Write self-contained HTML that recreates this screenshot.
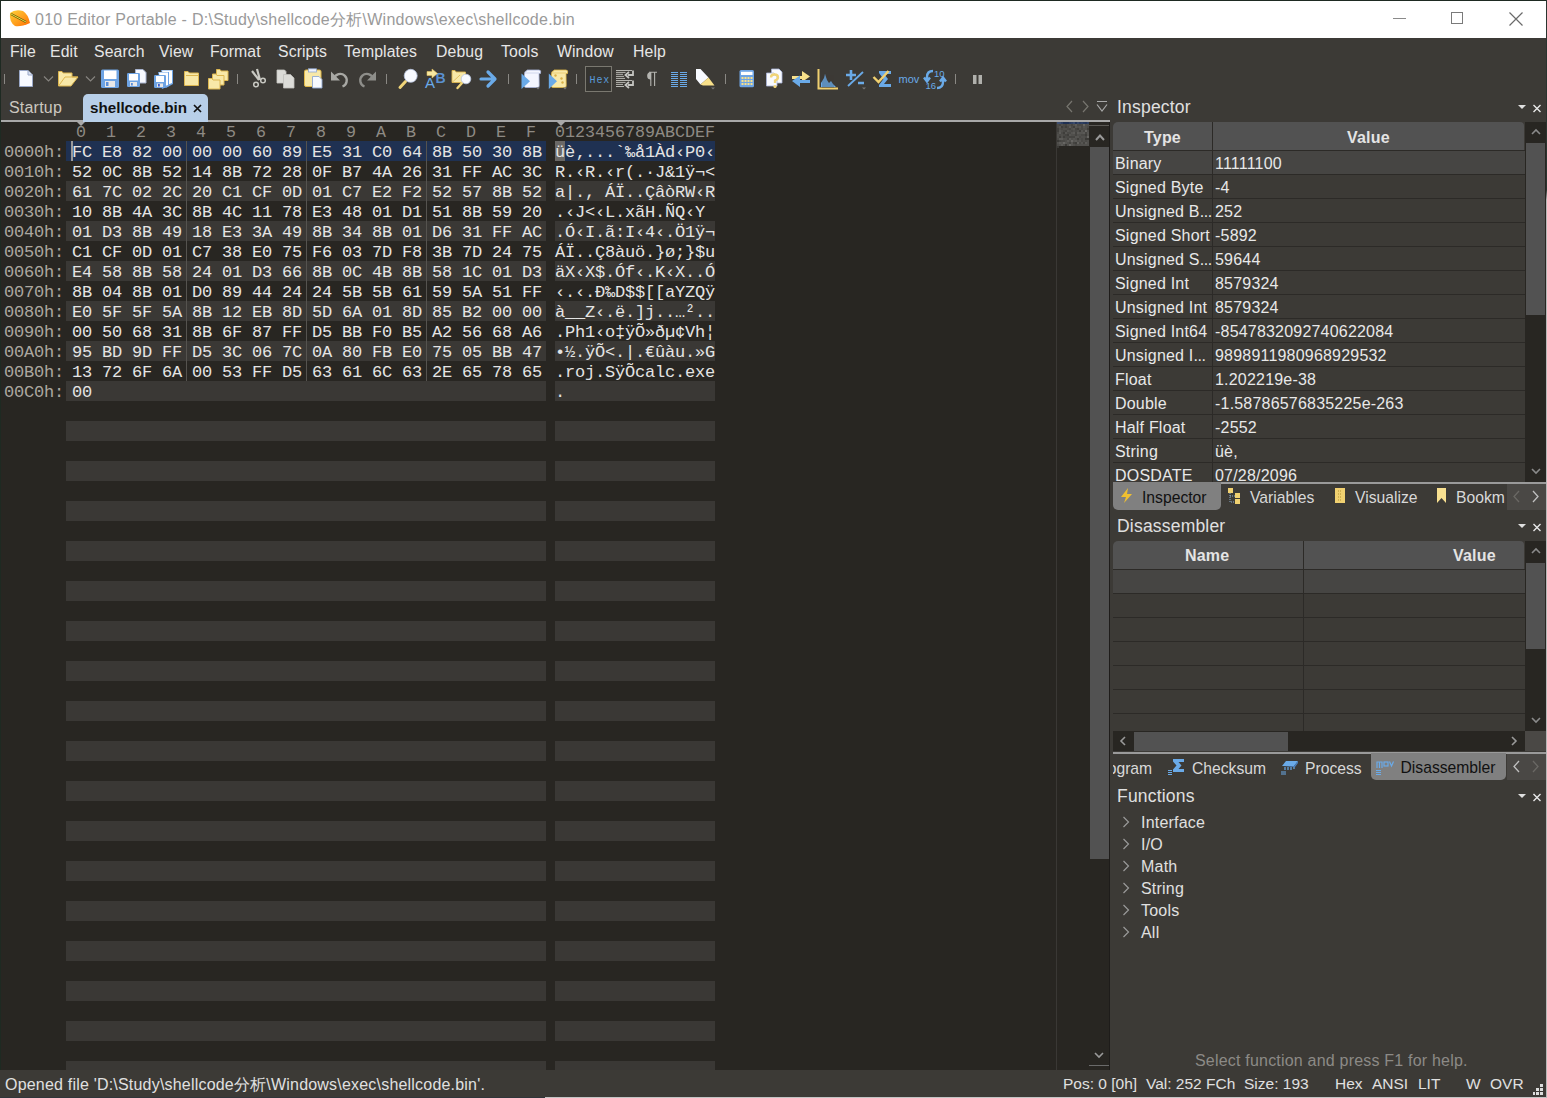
<!DOCTYPE html><html><head><meta charset="utf-8"><style>
*{margin:0;padding:0;box-sizing:border-box}
html,body{width:1547px;height:1098px;overflow:hidden;background:#3c3a36;font-family:"Liberation Sans",sans-serif;position:relative}
.a{position:absolute;white-space:nowrap}
.t{position:absolute;white-space:nowrap;line-height:1}
.mono{font-family:"Liberation Mono",monospace}
svg{position:absolute;overflow:visible}
</style></head><body>
<div class="a" style="left:0;top:0;width:1547px;height:38px;background:#fff"></div>
<div class="a" style="left:0;top:0;width:1547px;height:1px;background:#1e2a22"></div>
<div class="a" style="left:0;top:0;width:1px;height:1098px;background:#1e2a22"></div>
<svg style="left:9px;top:10px" width="22" height="18" viewBox="0 0 22 18">
<defs><linearGradient id="gi" x1="0" y1="0" x2="1" y2="1"><stop offset="0" stop-color="#ffd23a"/><stop offset="0.6" stop-color="#ff9a1a"/><stop offset="1" stop-color="#ff6a00"/></linearGradient></defs>
<path d="M1 3 Q6 -1 14 1 Q19 4 21 13 Q12 17 6 16 Q0 12 1 3Z" fill="url(#gi)"/>
<path d="M2 4 L17 12" stroke="#6b5a10" stroke-width="2.2"/><path d="M2 4 L17 12" stroke="#e8e040" stroke-width="1"/>
</svg>
<div class="t" style="left:35px;top:11.5px;font-size:16px;letter-spacing:0.26px;color:#9a9a9a">010 Editor Portable - D:\Study\shellcode分析\Windows\exec\shellcode.bin</div>
<div class="a" style="left:1393px;top:18px;width:13px;height:1px;background:#8a8a8a"></div>
<div class="a" style="left:1451px;top:12px;width:12px;height:12px;border:1px solid #7a7a7a"></div>
<svg style="left:1509px;top:12px" width="14" height="14"><path d="M0.5 0.5L13.5 13.5M13.5 0.5L0.5 13.5" stroke="#6a6a6a" stroke-width="1.2"/></svg>
<div class="t" style="left:10px;top:44.4px;font-size:15.8px;letter-spacing:0.1px;color:#e6e6e6">File</div>
<div class="t" style="left:50px;top:44.4px;font-size:15.8px;letter-spacing:0.1px;color:#e6e6e6">Edit</div>
<div class="t" style="left:94px;top:44.4px;font-size:15.8px;letter-spacing:0.1px;color:#e6e6e6">Search</div>
<div class="t" style="left:159px;top:44.4px;font-size:15.8px;letter-spacing:0.1px;color:#e6e6e6">View</div>
<div class="t" style="left:210px;top:44.4px;font-size:15.8px;letter-spacing:0.1px;color:#e6e6e6">Format</div>
<div class="t" style="left:278px;top:44.4px;font-size:15.8px;letter-spacing:0.1px;color:#e6e6e6">Scripts</div>
<div class="t" style="left:344px;top:44.4px;font-size:15.8px;letter-spacing:0.1px;color:#e6e6e6">Templates</div>
<div class="t" style="left:436px;top:44.4px;font-size:15.8px;letter-spacing:0.1px;color:#e6e6e6">Debug</div>
<div class="t" style="left:501px;top:44.4px;font-size:15.8px;letter-spacing:0.1px;color:#e6e6e6">Tools</div>
<div class="t" style="left:557px;top:44.4px;font-size:15.8px;letter-spacing:0.1px;color:#e6e6e6">Window</div>
<div class="t" style="left:633px;top:44.4px;font-size:15.8px;letter-spacing:0.1px;color:#e6e6e6">Help</div>
<div class="a" style="left:1px;top:122px;width:1109px;height:948px;background:#282622"></div>
<div class="a" style="left:1px;top:120px;width:1109px;height:2px;background:#a8a8a8"></div>
<div class="a" style="left:66px;top:141px;width:480px;height:20px;background:#1f3152"></div>
<div class="a" style="left:555px;top:141px;width:160px;height:20px;background:#1f3152"></div>
<div class="a" style="left:66px;top:181px;width:480px;height:20px;background:#3a3835"></div>
<div class="a" style="left:555px;top:181px;width:160px;height:20px;background:#3a3835"></div>
<div class="a" style="left:66px;top:221px;width:480px;height:20px;background:#3a3835"></div>
<div class="a" style="left:555px;top:221px;width:160px;height:20px;background:#3a3835"></div>
<div class="a" style="left:66px;top:261px;width:480px;height:20px;background:#3a3835"></div>
<div class="a" style="left:555px;top:261px;width:160px;height:20px;background:#3a3835"></div>
<div class="a" style="left:66px;top:301px;width:480px;height:20px;background:#3a3835"></div>
<div class="a" style="left:555px;top:301px;width:160px;height:20px;background:#3a3835"></div>
<div class="a" style="left:66px;top:341px;width:480px;height:20px;background:#3a3835"></div>
<div class="a" style="left:555px;top:341px;width:160px;height:20px;background:#3a3835"></div>
<div class="a" style="left:66px;top:381px;width:480px;height:20px;background:#3a3835"></div>
<div class="a" style="left:555px;top:381px;width:160px;height:20px;background:#3a3835"></div>
<div class="a" style="left:66px;top:421px;width:480px;height:20px;background:#3a3835"></div>
<div class="a" style="left:555px;top:421px;width:160px;height:20px;background:#3a3835"></div>
<div class="a" style="left:66px;top:461px;width:480px;height:20px;background:#3a3835"></div>
<div class="a" style="left:555px;top:461px;width:160px;height:20px;background:#3a3835"></div>
<div class="a" style="left:66px;top:501px;width:480px;height:20px;background:#3a3835"></div>
<div class="a" style="left:555px;top:501px;width:160px;height:20px;background:#3a3835"></div>
<div class="a" style="left:66px;top:541px;width:480px;height:20px;background:#3a3835"></div>
<div class="a" style="left:555px;top:541px;width:160px;height:20px;background:#3a3835"></div>
<div class="a" style="left:66px;top:581px;width:480px;height:20px;background:#3a3835"></div>
<div class="a" style="left:555px;top:581px;width:160px;height:20px;background:#3a3835"></div>
<div class="a" style="left:66px;top:621px;width:480px;height:20px;background:#3a3835"></div>
<div class="a" style="left:555px;top:621px;width:160px;height:20px;background:#3a3835"></div>
<div class="a" style="left:66px;top:661px;width:480px;height:20px;background:#3a3835"></div>
<div class="a" style="left:555px;top:661px;width:160px;height:20px;background:#3a3835"></div>
<div class="a" style="left:66px;top:701px;width:480px;height:20px;background:#3a3835"></div>
<div class="a" style="left:555px;top:701px;width:160px;height:20px;background:#3a3835"></div>
<div class="a" style="left:66px;top:741px;width:480px;height:20px;background:#3a3835"></div>
<div class="a" style="left:555px;top:741px;width:160px;height:20px;background:#3a3835"></div>
<div class="a" style="left:66px;top:781px;width:480px;height:20px;background:#3a3835"></div>
<div class="a" style="left:555px;top:781px;width:160px;height:20px;background:#3a3835"></div>
<div class="a" style="left:66px;top:821px;width:480px;height:20px;background:#3a3835"></div>
<div class="a" style="left:555px;top:821px;width:160px;height:20px;background:#3a3835"></div>
<div class="a" style="left:66px;top:861px;width:480px;height:20px;background:#3a3835"></div>
<div class="a" style="left:555px;top:861px;width:160px;height:20px;background:#3a3835"></div>
<div class="a" style="left:66px;top:901px;width:480px;height:20px;background:#3a3835"></div>
<div class="a" style="left:555px;top:901px;width:160px;height:20px;background:#3a3835"></div>
<div class="a" style="left:66px;top:941px;width:480px;height:20px;background:#3a3835"></div>
<div class="a" style="left:555px;top:941px;width:160px;height:20px;background:#3a3835"></div>
<div class="a" style="left:66px;top:981px;width:480px;height:20px;background:#3a3835"></div>
<div class="a" style="left:555px;top:981px;width:160px;height:20px;background:#3a3835"></div>
<div class="a" style="left:66px;top:1021px;width:480px;height:20px;background:#3a3835"></div>
<div class="a" style="left:555px;top:1021px;width:160px;height:20px;background:#3a3835"></div>
<div class="a" style="left:66px;top:1061px;width:480px;height:9px;background:#3a3835"></div>
<div class="a" style="left:555px;top:1061px;width:160px;height:9px;background:#3a3835"></div>
<div class="a" style="left:186px;top:141px;width:1px;height:240px;background:#55534f"></div>
<div class="a" style="left:306px;top:141px;width:1px;height:240px;background:#55534f"></div>
<div class="a" style="left:426px;top:141px;width:1px;height:240px;background:#55534f"></div>
<div class="a" style="left:71px;top:141px;width:2px;height:20px;background:#9a9a9a"></div>
<div class="a" style="left:555px;top:141px;width:10px;height:20px;background:#6a6866"></div>
<div class="t mono" style="left:76px;top:124.7px;font-size:16.67px;color:#8e8a84">0</div>
<div class="t mono" style="left:106px;top:124.7px;font-size:16.67px;color:#8e8a84">1</div>
<div class="t mono" style="left:136px;top:124.7px;font-size:16.67px;color:#8e8a84">2</div>
<div class="t mono" style="left:166px;top:124.7px;font-size:16.67px;color:#8e8a84">3</div>
<div class="t mono" style="left:196px;top:124.7px;font-size:16.67px;color:#8e8a84">4</div>
<div class="t mono" style="left:226px;top:124.7px;font-size:16.67px;color:#8e8a84">5</div>
<div class="t mono" style="left:256px;top:124.7px;font-size:16.67px;color:#8e8a84">6</div>
<div class="t mono" style="left:286px;top:124.7px;font-size:16.67px;color:#8e8a84">7</div>
<div class="t mono" style="left:316px;top:124.7px;font-size:16.67px;color:#8e8a84">8</div>
<div class="t mono" style="left:346px;top:124.7px;font-size:16.67px;color:#8e8a84">9</div>
<div class="t mono" style="left:376px;top:124.7px;font-size:16.67px;color:#8e8a84">A</div>
<div class="t mono" style="left:406px;top:124.7px;font-size:16.67px;color:#8e8a84">B</div>
<div class="t mono" style="left:436px;top:124.7px;font-size:16.67px;color:#8e8a84">C</div>
<div class="t mono" style="left:466px;top:124.7px;font-size:16.67px;color:#8e8a84">D</div>
<div class="t mono" style="left:496px;top:124.7px;font-size:16.67px;color:#8e8a84">E</div>
<div class="t mono" style="left:526px;top:124.7px;font-size:16.67px;color:#8e8a84">F</div>
<div class="t mono" style="left:555px;top:124.7px;font-size:16.67px;color:#8e8a84">0123456789ABCDEF</div>
<div class="t mono" style="left:4px;top:144.2px;font-size:17px;letter-spacing:-0.2px;color:#aca8a0">0000h:</div>
<div class="t mono" style="left:72px;top:144.2px;font-size:17px;letter-spacing:-0.2px;color:#e4e4e4;white-space:pre">FC E8 82 00 00 00 60 89 E5 31 C0 64 8B 50 30 8B </div>
<div class="t mono" style="left:555px;top:144.2px;font-size:17px;letter-spacing:-0.2px;color:#e4e4e4;white-space:pre">üè‚...`‰å1Àd‹P0‹</div>
<div class="t mono" style="left:4px;top:164.2px;font-size:17px;letter-spacing:-0.2px;color:#aca8a0">0010h:</div>
<div class="t mono" style="left:72px;top:164.2px;font-size:17px;letter-spacing:-0.2px;color:#e4e4e4;white-space:pre">52 0C 8B 52 14 8B 72 28 0F B7 4A 26 31 FF AC 3C </div>
<div class="t mono" style="left:555px;top:164.2px;font-size:17px;letter-spacing:-0.2px;color:#e4e4e4;white-space:pre">R.‹R.‹r(.·J&amp;1ÿ¬&lt;</div>
<div class="t mono" style="left:4px;top:184.2px;font-size:17px;letter-spacing:-0.2px;color:#aca8a0">0020h:</div>
<div class="t mono" style="left:72px;top:184.2px;font-size:17px;letter-spacing:-0.2px;color:#e4e4e4;white-space:pre">61 7C 02 2C 20 C1 CF 0D 01 C7 E2 F2 52 57 8B 52 </div>
<div class="t mono" style="left:555px;top:184.2px;font-size:17px;letter-spacing:-0.2px;color:#e4e4e4;white-space:pre">a|., ÁÏ..ÇâòRW‹R</div>
<div class="t mono" style="left:4px;top:204.2px;font-size:17px;letter-spacing:-0.2px;color:#aca8a0">0030h:</div>
<div class="t mono" style="left:72px;top:204.2px;font-size:17px;letter-spacing:-0.2px;color:#e4e4e4;white-space:pre">10 8B 4A 3C 8B 4C 11 78 E3 48 01 D1 51 8B 59 20 </div>
<div class="t mono" style="left:555px;top:204.2px;font-size:17px;letter-spacing:-0.2px;color:#e4e4e4;white-space:pre">.‹J&lt;‹L.xãH.ÑQ‹Y </div>
<div class="t mono" style="left:4px;top:224.2px;font-size:17px;letter-spacing:-0.2px;color:#aca8a0">0040h:</div>
<div class="t mono" style="left:72px;top:224.2px;font-size:17px;letter-spacing:-0.2px;color:#e4e4e4;white-space:pre">01 D3 8B 49 18 E3 3A 49 8B 34 8B 01 D6 31 FF AC </div>
<div class="t mono" style="left:555px;top:224.2px;font-size:17px;letter-spacing:-0.2px;color:#e4e4e4;white-space:pre">.Ó‹I.ã:I‹4‹.Ö1ÿ¬</div>
<div class="t mono" style="left:4px;top:244.2px;font-size:17px;letter-spacing:-0.2px;color:#aca8a0">0050h:</div>
<div class="t mono" style="left:72px;top:244.2px;font-size:17px;letter-spacing:-0.2px;color:#e4e4e4;white-space:pre">C1 CF 0D 01 C7 38 E0 75 F6 03 7D F8 3B 7D 24 75 </div>
<div class="t mono" style="left:555px;top:244.2px;font-size:17px;letter-spacing:-0.2px;color:#e4e4e4;white-space:pre">ÁÏ..Ç8àuö.}ø;}$u</div>
<div class="t mono" style="left:4px;top:264.2px;font-size:17px;letter-spacing:-0.2px;color:#aca8a0">0060h:</div>
<div class="t mono" style="left:72px;top:264.2px;font-size:17px;letter-spacing:-0.2px;color:#e4e4e4;white-space:pre">E4 58 8B 58 24 01 D3 66 8B 0C 4B 8B 58 1C 01 D3 </div>
<div class="t mono" style="left:555px;top:264.2px;font-size:17px;letter-spacing:-0.2px;color:#e4e4e4;white-space:pre">äX‹X$.Óf‹.K‹X..Ó</div>
<div class="t mono" style="left:4px;top:284.2px;font-size:17px;letter-spacing:-0.2px;color:#aca8a0">0070h:</div>
<div class="t mono" style="left:72px;top:284.2px;font-size:17px;letter-spacing:-0.2px;color:#e4e4e4;white-space:pre">8B 04 8B 01 D0 89 44 24 24 5B 5B 61 59 5A 51 FF </div>
<div class="t mono" style="left:555px;top:284.2px;font-size:17px;letter-spacing:-0.2px;color:#e4e4e4;white-space:pre">‹.‹.Ð‰D$$[[aYZQÿ</div>
<div class="t mono" style="left:4px;top:304.2px;font-size:17px;letter-spacing:-0.2px;color:#aca8a0">0080h:</div>
<div class="t mono" style="left:72px;top:304.2px;font-size:17px;letter-spacing:-0.2px;color:#e4e4e4;white-space:pre">E0 5F 5F 5A 8B 12 EB 8D 5D 6A 01 8D 85 B2 00 00 </div>
<div class="t mono" style="left:555px;top:304.2px;font-size:17px;letter-spacing:-0.2px;color:#e4e4e4;white-space:pre">à__Z‹.ë.]j..…²..</div>
<div class="t mono" style="left:4px;top:324.2px;font-size:17px;letter-spacing:-0.2px;color:#aca8a0">0090h:</div>
<div class="t mono" style="left:72px;top:324.2px;font-size:17px;letter-spacing:-0.2px;color:#e4e4e4;white-space:pre">00 50 68 31 8B 6F 87 FF D5 BB F0 B5 A2 56 68 A6 </div>
<div class="t mono" style="left:555px;top:324.2px;font-size:17px;letter-spacing:-0.2px;color:#e4e4e4;white-space:pre">.Ph1‹o‡ÿÕ»ðµ¢Vh¦</div>
<div class="t mono" style="left:4px;top:344.2px;font-size:17px;letter-spacing:-0.2px;color:#aca8a0">00A0h:</div>
<div class="t mono" style="left:72px;top:344.2px;font-size:17px;letter-spacing:-0.2px;color:#e4e4e4;white-space:pre">95 BD 9D FF D5 3C 06 7C 0A 80 FB E0 75 05 BB 47 </div>
<div class="t mono" style="left:555px;top:344.2px;font-size:17px;letter-spacing:-0.2px;color:#e4e4e4;white-space:pre">•½.ÿÕ&lt;.|.€ûàu.»G</div>
<div class="t mono" style="left:4px;top:364.2px;font-size:17px;letter-spacing:-0.2px;color:#aca8a0">00B0h:</div>
<div class="t mono" style="left:72px;top:364.2px;font-size:17px;letter-spacing:-0.2px;color:#e4e4e4;white-space:pre">13 72 6F 6A 00 53 FF D5 63 61 6C 63 2E 65 78 65 </div>
<div class="t mono" style="left:555px;top:364.2px;font-size:17px;letter-spacing:-0.2px;color:#e4e4e4;white-space:pre">.roj.SÿÕcalc.exe</div>
<div class="t mono" style="left:4px;top:384.2px;font-size:17px;letter-spacing:-0.2px;color:#aca8a0">00C0h:</div>
<div class="t mono" style="left:72px;top:384.2px;font-size:17px;letter-spacing:-0.2px;color:#e4e4e4;white-space:pre">00 </div>
<div class="t mono" style="left:555px;top:384.2px;font-size:17px;letter-spacing:-0.2px;color:#e4e4e4;white-space:pre">.</div>
<svg style="left:76px;top:121px" width="10" height="5"><path d="M0 0H10L5 5Z" fill="#a8a8a8"/></svg>
<svg style="left:556px;top:121px" width="10" height="5"><path d="M0 0H10L5 5Z" fill="#a8a8a8"/></svg>
<div class="a" style="left:1056px;top:122px;width:1px;height:948px;background:#3a3835"></div>
<svg style="left:1057px;top:122px" width="32" height="26" shape-rendering="crispEdges"><rect x="0" y="0" width="2" height="2" fill="rgb(60, 77, 111)"/><rect x="2" y="0" width="2" height="2" fill="rgb(58, 75, 109)"/><rect x="4" y="0" width="2" height="2" fill="rgb(46, 63, 97)"/><rect x="6" y="0" width="2" height="2" fill="rgb(31, 48, 82)"/><rect x="8" y="0" width="2" height="2" fill="rgb(31, 48, 82)"/><rect x="10" y="0" width="2" height="2" fill="rgb(31, 48, 82)"/><rect x="12" y="0" width="2" height="2" fill="rgb(42, 59, 93)"/><rect x="14" y="0" width="2" height="2" fill="rgb(47, 64, 98)"/><rect x="16" y="0" width="2" height="2" fill="rgb(57, 74, 108)"/><rect x="18" y="0" width="2" height="2" fill="rgb(36, 53, 87)"/><rect x="20" y="0" width="2" height="2" fill="rgb(53, 70, 104)"/><rect x="22" y="0" width="2" height="2" fill="rgb(42, 59, 93)"/><rect x="24" y="0" width="2" height="2" fill="rgb(47, 64, 98)"/><rect x="26" y="0" width="2" height="2" fill="rgb(40, 57, 91)"/><rect x="28" y="0" width="2" height="2" fill="rgb(36, 53, 87)"/><rect x="30" y="0" width="2" height="2" fill="rgb(47, 64, 98)"/><rect x="0" y="2" width="2" height="2" fill="rgb(74, 73, 70)"/><rect x="2" y="2" width="2" height="2" fill="rgb(69, 68, 65)"/><rect x="4" y="2" width="2" height="2" fill="rgb(80, 79, 76)"/><rect x="6" y="2" width="2" height="2" fill="rgb(74, 73, 70)"/><rect x="8" y="2" width="2" height="2" fill="rgb(69, 68, 65)"/><rect x="10" y="2" width="2" height="2" fill="rgb(80, 79, 76)"/><rect x="12" y="2" width="2" height="2" fill="rgb(80, 79, 76)"/><rect x="14" y="2" width="2" height="2" fill="rgb(69, 68, 65)"/><rect x="16" y="2" width="2" height="2" fill="rgb(80, 79, 76)"/><rect x="18" y="2" width="2" height="2" fill="rgb(91, 90, 87)"/><rect x="20" y="2" width="2" height="2" fill="rgb(74, 73, 70)"/><rect x="22" y="2" width="2" height="2" fill="rgb(74, 73, 70)"/><rect x="24" y="2" width="2" height="2" fill="rgb(74, 73, 70)"/><rect x="26" y="2" width="2" height="2" fill="rgb(103, 102, 99)"/><rect x="28" y="2" width="2" height="2" fill="rgb(80, 79, 76)"/><rect x="30" y="2" width="2" height="2" fill="rgb(80, 79, 76)"/><rect x="0" y="4" width="2" height="2" fill="rgb(74, 73, 70)"/><rect x="2" y="4" width="2" height="2" fill="rgb(86, 85, 82)"/><rect x="4" y="4" width="2" height="2" fill="rgb(63, 62, 59)"/><rect x="6" y="4" width="2" height="2" fill="rgb(74, 73, 70)"/><rect x="8" y="4" width="2" height="2" fill="rgb(63, 62, 59)"/><rect x="10" y="4" width="2" height="2" fill="rgb(74, 73, 70)"/><rect x="12" y="4" width="2" height="2" fill="rgb(91, 90, 87)"/><rect x="14" y="4" width="2" height="2" fill="rgb(74, 73, 70)"/><rect x="16" y="4" width="2" height="2" fill="rgb(63, 62, 59)"/><rect x="18" y="4" width="2" height="2" fill="rgb(86, 85, 82)"/><rect x="20" y="4" width="2" height="2" fill="rgb(80, 79, 76)"/><rect x="22" y="4" width="2" height="2" fill="rgb(86, 85, 82)"/><rect x="24" y="4" width="2" height="2" fill="rgb(74, 73, 70)"/><rect x="26" y="4" width="2" height="2" fill="rgb(86, 85, 82)"/><rect x="28" y="4" width="2" height="2" fill="rgb(80, 79, 76)"/><rect x="30" y="4" width="2" height="2" fill="rgb(74, 73, 70)"/><rect x="0" y="6" width="2" height="2" fill="rgb(63, 62, 59)"/><rect x="2" y="6" width="2" height="2" fill="rgb(80, 79, 76)"/><rect x="4" y="6" width="2" height="2" fill="rgb(74, 73, 70)"/><rect x="6" y="6" width="2" height="2" fill="rgb(80, 79, 76)"/><rect x="8" y="6" width="2" height="2" fill="rgb(80, 79, 76)"/><rect x="10" y="6" width="2" height="2" fill="rgb(74, 73, 70)"/><rect x="12" y="6" width="2" height="2" fill="rgb(69, 68, 65)"/><rect x="14" y="6" width="2" height="2" fill="rgb(80, 79, 76)"/><rect x="16" y="6" width="2" height="2" fill="rgb(86, 85, 82)"/><rect x="18" y="6" width="2" height="2" fill="rgb(69, 68, 65)"/><rect x="20" y="6" width="2" height="2" fill="rgb(63, 62, 59)"/><rect x="22" y="6" width="2" height="2" fill="rgb(80, 79, 76)"/><rect x="24" y="6" width="2" height="2" fill="rgb(74, 73, 70)"/><rect x="26" y="6" width="2" height="2" fill="rgb(80, 79, 76)"/><rect x="28" y="6" width="2" height="2" fill="rgb(80, 79, 76)"/><rect x="30" y="6" width="2" height="2" fill="rgb(63, 62, 59)"/><rect x="0" y="8" width="2" height="2" fill="rgb(63, 62, 59)"/><rect x="2" y="8" width="2" height="2" fill="rgb(86, 85, 82)"/><rect x="4" y="8" width="2" height="2" fill="rgb(80, 79, 76)"/><rect x="6" y="8" width="2" height="2" fill="rgb(74, 73, 70)"/><rect x="8" y="8" width="2" height="2" fill="rgb(69, 68, 65)"/><rect x="10" y="8" width="2" height="2" fill="rgb(86, 85, 82)"/><rect x="12" y="8" width="2" height="2" fill="rgb(80, 79, 76)"/><rect x="14" y="8" width="2" height="2" fill="rgb(74, 73, 70)"/><rect x="16" y="8" width="2" height="2" fill="rgb(80, 79, 76)"/><rect x="18" y="8" width="2" height="2" fill="rgb(74, 73, 70)"/><rect x="20" y="8" width="2" height="2" fill="rgb(80, 79, 76)"/><rect x="22" y="8" width="2" height="2" fill="rgb(63, 62, 59)"/><rect x="24" y="8" width="2" height="2" fill="rgb(86, 85, 82)"/><rect x="26" y="8" width="2" height="2" fill="rgb(74, 73, 70)"/><rect x="28" y="8" width="2" height="2" fill="rgb(103, 102, 99)"/><rect x="30" y="8" width="2" height="2" fill="rgb(80, 79, 76)"/><rect x="0" y="10" width="2" height="2" fill="rgb(74, 73, 70)"/><rect x="2" y="10" width="2" height="2" fill="rgb(91, 90, 87)"/><rect x="4" y="10" width="2" height="2" fill="rgb(74, 73, 70)"/><rect x="6" y="10" width="2" height="2" fill="rgb(63, 62, 59)"/><rect x="8" y="10" width="2" height="2" fill="rgb(86, 85, 82)"/><rect x="10" y="10" width="2" height="2" fill="rgb(74, 73, 70)"/><rect x="12" y="10" width="2" height="2" fill="rgb(74, 73, 70)"/><rect x="14" y="10" width="2" height="2" fill="rgb(86, 85, 82)"/><rect x="16" y="10" width="2" height="2" fill="rgb(91, 90, 87)"/><rect x="18" y="10" width="2" height="2" fill="rgb(69, 68, 65)"/><rect x="20" y="10" width="2" height="2" fill="rgb(91, 90, 87)"/><rect x="22" y="10" width="2" height="2" fill="rgb(86, 85, 82)"/><rect x="24" y="10" width="2" height="2" fill="rgb(86, 85, 82)"/><rect x="26" y="10" width="2" height="2" fill="rgb(91, 90, 87)"/><rect x="28" y="10" width="2" height="2" fill="rgb(69, 68, 65)"/><rect x="30" y="10" width="2" height="2" fill="rgb(86, 85, 82)"/><rect x="0" y="12" width="2" height="2" fill="rgb(80, 79, 76)"/><rect x="2" y="12" width="2" height="2" fill="rgb(74, 73, 70)"/><rect x="4" y="12" width="2" height="2" fill="rgb(80, 79, 76)"/><rect x="6" y="12" width="2" height="2" fill="rgb(74, 73, 70)"/><rect x="8" y="12" width="2" height="2" fill="rgb(69, 68, 65)"/><rect x="10" y="12" width="2" height="2" fill="rgb(63, 62, 59)"/><rect x="12" y="12" width="2" height="2" fill="rgb(86, 85, 82)"/><rect x="14" y="12" width="2" height="2" fill="rgb(80, 79, 76)"/><rect x="16" y="12" width="2" height="2" fill="rgb(80, 79, 76)"/><rect x="18" y="12" width="2" height="2" fill="rgb(69, 68, 65)"/><rect x="20" y="12" width="2" height="2" fill="rgb(80, 79, 76)"/><rect x="22" y="12" width="2" height="2" fill="rgb(80, 79, 76)"/><rect x="24" y="12" width="2" height="2" fill="rgb(74, 73, 70)"/><rect x="26" y="12" width="2" height="2" fill="rgb(74, 73, 70)"/><rect x="28" y="12" width="2" height="2" fill="rgb(63, 62, 59)"/><rect x="30" y="12" width="2" height="2" fill="rgb(86, 85, 82)"/><rect x="0" y="14" width="2" height="2" fill="rgb(80, 79, 76)"/><rect x="2" y="14" width="2" height="2" fill="rgb(63, 62, 59)"/><rect x="4" y="14" width="2" height="2" fill="rgb(80, 79, 76)"/><rect x="6" y="14" width="2" height="2" fill="rgb(63, 62, 59)"/><rect x="8" y="14" width="2" height="2" fill="rgb(74, 73, 70)"/><rect x="10" y="14" width="2" height="2" fill="rgb(74, 73, 70)"/><rect x="12" y="14" width="2" height="2" fill="rgb(69, 68, 65)"/><rect x="14" y="14" width="2" height="2" fill="rgb(69, 68, 65)"/><rect x="16" y="14" width="2" height="2" fill="rgb(69, 68, 65)"/><rect x="18" y="14" width="2" height="2" fill="rgb(86, 85, 82)"/><rect x="20" y="14" width="2" height="2" fill="rgb(86, 85, 82)"/><rect x="22" y="14" width="2" height="2" fill="rgb(74, 73, 70)"/><rect x="24" y="14" width="2" height="2" fill="rgb(80, 79, 76)"/><rect x="26" y="14" width="2" height="2" fill="rgb(80, 79, 76)"/><rect x="28" y="14" width="2" height="2" fill="rgb(74, 73, 70)"/><rect x="30" y="14" width="2" height="2" fill="rgb(103, 102, 99)"/><rect x="0" y="16" width="2" height="2" fill="rgb(74, 73, 70)"/><rect x="2" y="16" width="2" height="2" fill="rgb(91, 90, 87)"/><rect x="4" y="16" width="2" height="2" fill="rgb(91, 90, 87)"/><rect x="6" y="16" width="2" height="2" fill="rgb(80, 79, 76)"/><rect x="8" y="16" width="2" height="2" fill="rgb(80, 79, 76)"/><rect x="10" y="16" width="2" height="2" fill="rgb(69, 68, 65)"/><rect x="12" y="16" width="2" height="2" fill="rgb(91, 90, 87)"/><rect x="14" y="16" width="2" height="2" fill="rgb(80, 79, 76)"/><rect x="16" y="16" width="2" height="2" fill="rgb(86, 85, 82)"/><rect x="18" y="16" width="2" height="2" fill="rgb(80, 79, 76)"/><rect x="20" y="16" width="2" height="2" fill="rgb(63, 62, 59)"/><rect x="22" y="16" width="2" height="2" fill="rgb(80, 79, 76)"/><rect x="24" y="16" width="2" height="2" fill="rgb(74, 73, 70)"/><rect x="26" y="16" width="2" height="2" fill="rgb(80, 79, 76)"/><rect x="28" y="16" width="2" height="2" fill="rgb(58, 57, 54)"/><rect x="30" y="16" width="2" height="2" fill="rgb(58, 57, 54)"/><rect x="0" y="18" width="2" height="2" fill="rgb(58, 57, 54)"/><rect x="2" y="18" width="2" height="2" fill="rgb(69, 68, 65)"/><rect x="4" y="18" width="2" height="2" fill="rgb(74, 73, 70)"/><rect x="6" y="18" width="2" height="2" fill="rgb(74, 73, 70)"/><rect x="8" y="18" width="2" height="2" fill="rgb(80, 79, 76)"/><rect x="10" y="18" width="2" height="2" fill="rgb(91, 90, 87)"/><rect x="12" y="18" width="2" height="2" fill="rgb(80, 79, 76)"/><rect x="14" y="18" width="2" height="2" fill="rgb(103, 102, 99)"/><rect x="16" y="18" width="2" height="2" fill="rgb(86, 85, 82)"/><rect x="18" y="18" width="2" height="2" fill="rgb(91, 90, 87)"/><rect x="20" y="18" width="2" height="2" fill="rgb(80, 79, 76)"/><rect x="22" y="18" width="2" height="2" fill="rgb(86, 85, 82)"/><rect x="24" y="18" width="2" height="2" fill="rgb(74, 73, 70)"/><rect x="26" y="18" width="2" height="2" fill="rgb(80, 79, 76)"/><rect x="28" y="18" width="2" height="2" fill="rgb(74, 73, 70)"/><rect x="30" y="18" width="2" height="2" fill="rgb(80, 79, 76)"/><rect x="0" y="20" width="2" height="2" fill="rgb(80, 79, 76)"/><rect x="2" y="20" width="2" height="2" fill="rgb(91, 90, 87)"/><rect x="4" y="20" width="2" height="2" fill="rgb(86, 85, 82)"/><rect x="6" y="20" width="2" height="2" fill="rgb(103, 102, 99)"/><rect x="8" y="20" width="2" height="2" fill="rgb(86, 85, 82)"/><rect x="10" y="20" width="2" height="2" fill="rgb(80, 79, 76)"/><rect x="12" y="20" width="2" height="2" fill="rgb(69, 68, 65)"/><rect x="14" y="20" width="2" height="2" fill="rgb(86, 85, 82)"/><rect x="16" y="20" width="2" height="2" fill="rgb(69, 68, 65)"/><rect x="18" y="20" width="2" height="2" fill="rgb(63, 62, 59)"/><rect x="20" y="20" width="2" height="2" fill="rgb(97, 96, 93)"/><rect x="22" y="20" width="2" height="2" fill="rgb(74, 73, 70)"/><rect x="24" y="20" width="2" height="2" fill="rgb(86, 85, 82)"/><rect x="26" y="20" width="2" height="2" fill="rgb(69, 68, 65)"/><rect x="28" y="20" width="2" height="2" fill="rgb(91, 90, 87)"/><rect x="30" y="20" width="2" height="2" fill="rgb(80, 79, 76)"/><rect x="0" y="22" width="2" height="2" fill="rgb(74, 73, 70)"/><rect x="2" y="22" width="2" height="2" fill="rgb(80, 79, 76)"/><rect x="4" y="22" width="2" height="2" fill="rgb(91, 90, 87)"/><rect x="6" y="22" width="2" height="2" fill="rgb(80, 79, 76)"/><rect x="8" y="22" width="2" height="2" fill="rgb(58, 57, 54)"/><rect x="10" y="22" width="2" height="2" fill="rgb(80, 79, 76)"/><rect x="12" y="22" width="2" height="2" fill="rgb(103, 102, 99)"/><rect x="14" y="22" width="2" height="2" fill="rgb(86, 85, 82)"/><rect x="16" y="22" width="2" height="2" fill="rgb(80, 79, 76)"/><rect x="18" y="22" width="2" height="2" fill="rgb(74, 73, 70)"/><rect x="20" y="22" width="2" height="2" fill="rgb(80, 79, 76)"/><rect x="22" y="22" width="2" height="2" fill="rgb(80, 79, 76)"/><rect x="24" y="22" width="2" height="2" fill="rgb(80, 79, 76)"/><rect x="26" y="22" width="2" height="2" fill="rgb(80, 79, 76)"/><rect x="28" y="22" width="2" height="2" fill="rgb(80, 79, 76)"/><rect x="30" y="22" width="2" height="2" fill="rgb(80, 79, 76)"/><rect x="0" y="24" width="2" height="2" fill="rgb(58, 57, 54)"/></svg>
<div class="a" style="left:1090px;top:122px;width:19px;height:948px;background:#282622"></div>
<div class="a" style="left:1090px;top:147px;width:19px;height:712px;background:#525252"></div>
<div class="a" style="left:1089px;top:125px;width:21px;height:1px;background:#5a5854"></div>
<svg style="left:1095px;top:134px" width="10" height="7"><path d="M1 6L5 1.5L9 6" stroke="#9a9a9a" stroke-width="2" fill="none"/></svg>
<svg style="left:1094px;top:1052px" width="10" height="6"><path d="M1 1L5 5L9 1" stroke="#9a9a9a" stroke-width="1.6" fill="none"/></svg>
<div class="a" style="left:1089px;top:1065px;width:20px;height:1px;background:#6a6a6a"></div>
<div class="a" style="left:1109px;top:122px;width:1px;height:948px;background:#1e1c1a"></div>
<div class="t" style="left:9px;top:100px;font-size:16px;letter-spacing:0.2px;color:#ccc8c0">Startup</div>
<div class="a" style="left:83px;top:94px;width:125px;height:28px;background:#b8cfe8;border-radius:5px 5px 0 0"></div>
<div class="t" style="left:90px;top:99.5px;font-size:15.2px;font-weight:bold;color:#111">shellcode.bin</div>
<svg style="left:193px;top:104px" width="9" height="9"><path d="M1 1L8 8M8 1L1 8" stroke="#111" stroke-width="1.7"/></svg>
<svg style="left:1066px;top:100px" width="50" height="14"><path d="M6 1L1 6.5L6 12M17 1L22 6.5L17 12" stroke="#77756f" stroke-width="1.2" fill="none"/><path d="M31 1.5H41M31 4.5L36 11L41 4.5" stroke="#a8a8a8" stroke-width="1.2" fill="none"/></svg>
<div class="a" style="left:0;top:1070px;width:1547px;height:28px;background:#3c3a36"></div>
<div class="a" style="left:0;top:1097px;width:545px;height:1px;background:#30353a"></div>
<div class="a" style="left:545px;top:1097px;width:1002px;height:1px;background:#c4c4c4"></div>
<div class="t" style="left:5px;top:1076.7px;font-size:16px;letter-spacing:0.2px;color:#e0e0e0">Opened file 'D:\Study\shellcode分析\Windows\exec\shellcode.bin'.</div>
<div class="t" style="left:1063px;top:1076.4px;font-size:15.5px;color:#e0e0e0">Pos: 0 [0h]</div>
<div class="t" style="left:1146px;top:1076.4px;font-size:15.5px;color:#e0e0e0">Val: 252 FCh</div>
<div class="t" style="left:1244px;top:1076.4px;font-size:15.5px;color:#e0e0e0">Size: 193</div>
<div class="t" style="left:1335px;top:1076.4px;font-size:15.5px;color:#e0e0e0">Hex</div>
<div class="t" style="left:1372px;top:1076.4px;font-size:15.5px;color:#e0e0e0">ANSI</div>
<div class="t" style="left:1418px;top:1076.4px;font-size:15.5px;color:#e0e0e0">LIT</div>
<div class="t" style="left:1466px;top:1076.4px;font-size:15.5px;color:#e0e0e0">W</div>
<div class="t" style="left:1490px;top:1076.4px;font-size:15.5px;color:#e0e0e0">OVR</div>
<div class="a" style="left:1110px;top:93px;width:437px;height:977px;background:#3c3a36"></div>
<div class="a" style="left:1546px;top:0;width:1px;height:1098px;background:linear-gradient(#2a3530 0px,#2a3530 190px,#b8b8b8 200px,#b8b8b8)"></div>
<div class="t" style="left:1117px;top:98.5px;font-size:17.5px;letter-spacing:0.2px;color:#e0e0e0">Inspector</div>
<svg style="left:1517px;top:103.5px" width="28" height="10"><path d="M1 1H9L5 5Z" fill="#e0e0e0"/><path d="M16.5 1L23.5 8M23.5 1L16.5 8" stroke="#e8e8e8" stroke-width="1.4"/></svg>
<div class="a" style="left:1113px;top:122px;width:411px;height:28px;background:#525252;border-radius:5px 4px 0 0"></div>
<div class="t" style="left:1144px;top:129.5px;font-size:16px;letter-spacing:0.2px;font-weight:bold;color:#e4e4e4">Type</div>
<div class="t" style="left:1347px;top:129.5px;font-size:16px;letter-spacing:0.2px;font-weight:bold;color:#e4e4e4">Value</div>
<div class="a" style="left:1113px;top:150px;width:412px;height:24px;background:#464543;border-top:1px solid #2c2a27;overflow:hidden"></div>
<div class="a" style="left:1113px;top:150px;width:412px;height:24px;overflow:hidden"><div class="a" style="left:0;top:0;width:99px;height:24px;overflow:hidden"><div class="t" style="left:2px;top:5.8px;font-size:16px;letter-spacing:0.2px;color:#e8e8e8">Binary</div></div><div class="t" style="left:102px;top:5.8px;font-size:16px;letter-spacing:0.2px;color:#e8e8e8">11111100</div></div>
<div class="a" style="left:1113px;top:174px;width:412px;height:24px;background:#3c3a36;border-top:1px solid #2c2a27;overflow:hidden"></div>
<div class="a" style="left:1113px;top:174px;width:412px;height:24px;overflow:hidden"><div class="a" style="left:0;top:0;width:99px;height:24px;overflow:hidden"><div class="t" style="left:2px;top:5.8px;font-size:16px;letter-spacing:0.2px;color:#e8e8e8">Signed Byte</div></div><div class="t" style="left:102px;top:5.8px;font-size:16px;letter-spacing:0.2px;color:#e8e8e8">-4</div></div>
<div class="a" style="left:1113px;top:198px;width:412px;height:24px;background:#3c3a36;border-top:1px solid #2c2a27;overflow:hidden"></div>
<div class="a" style="left:1113px;top:198px;width:412px;height:24px;overflow:hidden"><div class="a" style="left:0;top:0;width:99px;height:24px;overflow:hidden"><div class="t" style="left:2px;top:5.8px;font-size:16px;letter-spacing:0.2px;color:#e8e8e8">Unsigned B<span style="letter-spacing:-0.4px">...</span></div></div><div class="t" style="left:102px;top:5.8px;font-size:16px;letter-spacing:0.2px;color:#e8e8e8">252</div></div>
<div class="a" style="left:1113px;top:222px;width:412px;height:24px;background:#3c3a36;border-top:1px solid #2c2a27;overflow:hidden"></div>
<div class="a" style="left:1113px;top:222px;width:412px;height:24px;overflow:hidden"><div class="a" style="left:0;top:0;width:99px;height:24px;overflow:hidden"><div class="t" style="left:2px;top:5.8px;font-size:16px;letter-spacing:0.2px;color:#e8e8e8">Signed Short</div></div><div class="t" style="left:102px;top:5.8px;font-size:16px;letter-spacing:0.2px;color:#e8e8e8">-5892</div></div>
<div class="a" style="left:1113px;top:246px;width:412px;height:24px;background:#3c3a36;border-top:1px solid #2c2a27;overflow:hidden"></div>
<div class="a" style="left:1113px;top:246px;width:412px;height:24px;overflow:hidden"><div class="a" style="left:0;top:0;width:99px;height:24px;overflow:hidden"><div class="t" style="left:2px;top:5.8px;font-size:16px;letter-spacing:0.2px;color:#e8e8e8">Unsigned S<span style="letter-spacing:-0.4px">...</span></div></div><div class="t" style="left:102px;top:5.8px;font-size:16px;letter-spacing:0.2px;color:#e8e8e8">59644</div></div>
<div class="a" style="left:1113px;top:270px;width:412px;height:24px;background:#3c3a36;border-top:1px solid #2c2a27;overflow:hidden"></div>
<div class="a" style="left:1113px;top:270px;width:412px;height:24px;overflow:hidden"><div class="a" style="left:0;top:0;width:99px;height:24px;overflow:hidden"><div class="t" style="left:2px;top:5.8px;font-size:16px;letter-spacing:0.2px;color:#e8e8e8">Signed Int</div></div><div class="t" style="left:102px;top:5.8px;font-size:16px;letter-spacing:0.2px;color:#e8e8e8">8579324</div></div>
<div class="a" style="left:1113px;top:294px;width:412px;height:24px;background:#3c3a36;border-top:1px solid #2c2a27;overflow:hidden"></div>
<div class="a" style="left:1113px;top:294px;width:412px;height:24px;overflow:hidden"><div class="a" style="left:0;top:0;width:99px;height:24px;overflow:hidden"><div class="t" style="left:2px;top:5.8px;font-size:16px;letter-spacing:0.2px;color:#e8e8e8">Unsigned Int</div></div><div class="t" style="left:102px;top:5.8px;font-size:16px;letter-spacing:0.2px;color:#e8e8e8">8579324</div></div>
<div class="a" style="left:1113px;top:318px;width:412px;height:24px;background:#3c3a36;border-top:1px solid #2c2a27;overflow:hidden"></div>
<div class="a" style="left:1113px;top:318px;width:412px;height:24px;overflow:hidden"><div class="a" style="left:0;top:0;width:99px;height:24px;overflow:hidden"><div class="t" style="left:2px;top:5.8px;font-size:16px;letter-spacing:0.2px;color:#e8e8e8">Signed Int64</div></div><div class="t" style="left:102px;top:5.8px;font-size:16px;letter-spacing:0.2px;color:#e8e8e8">-8547832092740622084</div></div>
<div class="a" style="left:1113px;top:342px;width:412px;height:24px;background:#3c3a36;border-top:1px solid #2c2a27;overflow:hidden"></div>
<div class="a" style="left:1113px;top:342px;width:412px;height:24px;overflow:hidden"><div class="a" style="left:0;top:0;width:99px;height:24px;overflow:hidden"><div class="t" style="left:2px;top:5.8px;font-size:16px;letter-spacing:0.2px;color:#e8e8e8">Unsigned I<span style="letter-spacing:-0.4px">...</span></div></div><div class="t" style="left:102px;top:5.8px;font-size:16px;letter-spacing:0.2px;color:#e8e8e8">9898911980968929532</div></div>
<div class="a" style="left:1113px;top:366px;width:412px;height:24px;background:#3c3a36;border-top:1px solid #2c2a27;overflow:hidden"></div>
<div class="a" style="left:1113px;top:366px;width:412px;height:24px;overflow:hidden"><div class="a" style="left:0;top:0;width:99px;height:24px;overflow:hidden"><div class="t" style="left:2px;top:5.8px;font-size:16px;letter-spacing:0.2px;color:#e8e8e8">Float</div></div><div class="t" style="left:102px;top:5.8px;font-size:16px;letter-spacing:0.2px;color:#e8e8e8">1.202219e-38</div></div>
<div class="a" style="left:1113px;top:390px;width:412px;height:24px;background:#3c3a36;border-top:1px solid #2c2a27;overflow:hidden"></div>
<div class="a" style="left:1113px;top:390px;width:412px;height:24px;overflow:hidden"><div class="a" style="left:0;top:0;width:99px;height:24px;overflow:hidden"><div class="t" style="left:2px;top:5.8px;font-size:16px;letter-spacing:0.2px;color:#e8e8e8">Double</div></div><div class="t" style="left:102px;top:5.8px;font-size:16px;letter-spacing:0.2px;color:#e8e8e8">-1.58786576835225e-263</div></div>
<div class="a" style="left:1113px;top:414px;width:412px;height:24px;background:#3c3a36;border-top:1px solid #2c2a27;overflow:hidden"></div>
<div class="a" style="left:1113px;top:414px;width:412px;height:24px;overflow:hidden"><div class="a" style="left:0;top:0;width:99px;height:24px;overflow:hidden"><div class="t" style="left:2px;top:5.8px;font-size:16px;letter-spacing:0.2px;color:#e8e8e8">Half Float</div></div><div class="t" style="left:102px;top:5.8px;font-size:16px;letter-spacing:0.2px;color:#e8e8e8">-2552</div></div>
<div class="a" style="left:1113px;top:438px;width:412px;height:24px;background:#3c3a36;border-top:1px solid #2c2a27;overflow:hidden"></div>
<div class="a" style="left:1113px;top:438px;width:412px;height:24px;overflow:hidden"><div class="a" style="left:0;top:0;width:99px;height:24px;overflow:hidden"><div class="t" style="left:2px;top:5.8px;font-size:16px;letter-spacing:0.2px;color:#e8e8e8">String</div></div><div class="t" style="left:102px;top:5.8px;font-size:16px;letter-spacing:0.2px;color:#e8e8e8">üè,</div></div>
<div class="a" style="left:1113px;top:462px;width:412px;height:20px;background:#3c3a36;border-top:1px solid #2c2a27;overflow:hidden"></div>
<div class="a" style="left:1113px;top:462px;width:412px;height:20px;overflow:hidden"><div class="a" style="left:0;top:0;width:99px;height:24px;overflow:hidden"><div class="t" style="left:2px;top:5.8px;font-size:16px;letter-spacing:0.2px;color:#e8e8e8">DOSDATE</div></div><div class="t" style="left:102px;top:5.8px;font-size:16px;letter-spacing:0.2px;color:#e8e8e8">07/28/2096</div></div>
<div class="a" style="left:1212px;top:122px;width:1px;height:360px;background:#2c2a27"></div>
<div class="a" style="left:1525px;top:122px;width:21px;height:360px;background:#282622"></div>
<div class="a" style="left:1526px;top:143px;width:19px;height:172px;background:#525252"></div>
<svg style="left:1531px;top:129px" width="10" height="6"><path d="M1 5L5 1L9 5" stroke="#8a8a8a" stroke-width="1.6" fill="none"/></svg>
<svg style="left:1531px;top:468px" width="10" height="6"><path d="M1 1L5 5L9 1" stroke="#8a8a8a" stroke-width="1.6" fill="none"/></svg>
<div class="a" style="left:1113px;top:482px;width:433px;height:2px;background:#9a9a9a"></div>
<div class="a" style="left:1113px;top:482px;width:108px;height:28px;background:#808080;border-radius:0 0 5px 5px"></div>
<svg style="left:1120px;top:488px" width="14" height="16"><path d="M8 0L1 9H6L4 15L12 6H7Z" fill="#f0c030"/></svg>
<div class="t" style="left:1142px;top:489.5px;font-size:15.7px;color:#111">Inspector</div>
<svg style="left:1228px;top:488px" width="14" height="16"><rect x="0" y="0" width="5" height="5" fill="#f0d070"/><rect x="7" y="5" width="5" height="5" fill="#f0d070"/><rect x="7" y="11" width="5" height="5" fill="#f0d070"/><path d="M2 5V14H7M2 8H7" stroke="#8fb0d0" stroke-width="1" stroke-dasharray="1 1" fill="none"/></svg>
<div class="t" style="left:1250px;top:489.5px;font-size:15.7px;color:#d8d8d8">Variables</div>
<svg style="left:1335px;top:488px" width="10" height="16"><rect x="0" y="0" width="10" height="15" fill="#f0d070"/><path d="M3 3H7M3 6H7M3 9H7M3 12H7" stroke="#b09030" stroke-width="1" stroke-dasharray="1 1"/></svg>
<div class="t" style="left:1355px;top:489.5px;font-size:15.7px;color:#d8d8d8">Visualize</div>
<svg style="left:1437px;top:488px" width="9" height="16"><path d="M0 0H9V15L4.5 10L0 15Z" fill="#f8e090"/></svg>
<div class="a" style="left:1113px;top:482px;width:392px;height:28px;overflow:hidden"><div class="t" style="left:343px;top:7.5px;font-size:15.7px;color:#d8d8d8">Bookmarks</div></div>
<div class="a" style="left:1507px;top:484px;width:39px;height:26px;background:#4a4845"></div>
<svg style="left:1513px;top:490px" width="30" height="14"><path d="M6 1L1 6.5L6 12" stroke="#6a6864" stroke-width="1.3" fill="none"/><path d="M20 1L25 6.5L20 12" stroke="#c0c0c0" stroke-width="1.3" fill="none"/></svg>
<div class="t" style="left:1117px;top:517.5px;font-size:17.5px;letter-spacing:0.2px;color:#e0e0e0">Disassembler</div>
<svg style="left:1517px;top:522.5px" width="28" height="10"><path d="M1 1H9L5 5Z" fill="#e0e0e0"/><path d="M16.5 1L23.5 8M23.5 1L16.5 8" stroke="#e8e8e8" stroke-width="1.4"/></svg>
<div class="a" style="left:1113px;top:541px;width:411px;height:28px;background:#525252;border-radius:5px 4px 0 0"></div>
<div class="t" style="left:1185px;top:548px;font-size:16px;letter-spacing:0.2px;font-weight:bold;color:#e4e4e4">Name</div>
<div class="t" style="left:1453px;top:548px;font-size:16px;letter-spacing:0.2px;font-weight:bold;color:#e4e4e4">Value</div>
<div class="a" style="left:1113px;top:569px;width:412px;height:24px;background:#464543;border-top:1px solid #2c2a27"></div>
<div class="a" style="left:1113px;top:593px;width:412px;height:24px;background:#3c3a36;border-top:1px solid #2c2a27"></div>
<div class="a" style="left:1113px;top:617px;width:412px;height:24px;background:#3c3a36;border-top:1px solid #2c2a27"></div>
<div class="a" style="left:1113px;top:641px;width:412px;height:24px;background:#3c3a36;border-top:1px solid #2c2a27"></div>
<div class="a" style="left:1113px;top:665px;width:412px;height:24px;background:#3c3a36;border-top:1px solid #2c2a27"></div>
<div class="a" style="left:1113px;top:689px;width:412px;height:24px;background:#3c3a36;border-top:1px solid #2c2a27"></div>
<div class="a" style="left:1113px;top:713px;width:412px;height:18px;background:#3c3a36;border-top:1px solid #2c2a27"></div>
<div class="a" style="left:1303px;top:541px;width:1px;height:190px;background:#2c2a27"></div>
<div class="a" style="left:1525px;top:541px;width:21px;height:190px;background:#282622"></div>
<div class="a" style="left:1526px;top:563px;width:19px;height:86px;background:#525252"></div>
<svg style="left:1531px;top:548px" width="10" height="6"><path d="M1 5L5 1L9 5" stroke="#8a8a8a" stroke-width="1.6" fill="none"/></svg>
<svg style="left:1531px;top:717px" width="10" height="6"><path d="M1 1L5 5L9 1" stroke="#8a8a8a" stroke-width="1.6" fill="none"/></svg>
<div class="a" style="left:1113px;top:731px;width:412px;height:20px;background:#282622"></div>
<div class="a" style="left:1134px;top:732px;width:154px;height:19px;background:#525252"></div>
<div class="a" style="left:1525px;top:731px;width:21px;height:20px;background:#4a4845"></div>
<svg style="left:1119px;top:736px" width="10" height="10"><path d="M6 1L2 5L6 9" stroke="#9a9a9a" stroke-width="1.6" fill="none"/></svg>
<svg style="left:1510px;top:736px" width="10" height="10"><path d="M2 1L6 5L2 9" stroke="#9a9a9a" stroke-width="1.6" fill="none"/></svg>
<div class="a" style="left:1113px;top:752px;width:433px;height:2px;background:#9a9a9a"></div>
<div class="a" style="left:1113px;top:754px;width:394px;height:26px;overflow:hidden"><div class="t" style="left:-21px;top:6.5px;font-size:15.7px;color:#d8d8d8">Program</div><div class="t" style="left:79px;top:6.5px;font-size:15.7px;color:#d8d8d8">Checksum</div><div class="t" style="left:192px;top:6.5px;font-size:15.7px;color:#d8d8d8">Process</div></div>
<svg style="left:1168px;top:759px" width="18" height="16"><path d="M5 0H16V3H10.5L13.5 6.5L10.5 10H16V13H5V10.5L8.5 6.5L5 2.5Z" fill="#6aaae8"/><path d="M0 11.5H4M0 13.5H4M0 15.5H4" stroke="#6aaae8" stroke-width="1"/></svg>
<svg style="left:1281px;top:760px" width="17" height="15"><path d="M5 1H17L13 6H1Z" fill="#6aaae8"/><path d="M13 6L17 1V3L14 7H2Z" fill="#4a80c0"/><path d="M4 7V10M7 7V10M10 7V10M13 7V9" stroke="#6aaae8" stroke-width="1.2"/><path d="M0 12H5M0 14H5" stroke="#6aaae8" stroke-width="1"/></svg>
<div class="a" style="left:1371px;top:753px;width:135px;height:27px;background:#808080;border-radius:0 0 5px 5px"></div>
<svg style="left:1376px;top:760px" width="18" height="16"><g fill="none" stroke="#6aaae8" stroke-width="1.2"><path d="M1 8V2H6V8M3.5 2V8"/><rect x="8" y="2" width="4" height="4"/><path d="M13.5 1.5L15.5 6L17.5 1.5"/></g><path d="M0 10.5H5M0 12.5H5M0 14.5H5" stroke="#6aaae8" stroke-width="1"/></svg>
<div class="t" style="left:1400.5px;top:759.6px;font-size:15.7px;color:#111">Disassembler</div>
<div class="a" style="left:1507px;top:754px;width:39px;height:26px;background:#4a4845"></div>
<svg style="left:1513px;top:760px" width="30" height="14"><path d="M6 1L1 6.5L6 12" stroke="#c0c0c0" stroke-width="1.3" fill="none"/><path d="M20 1L25 6.5L20 12" stroke="#6a6864" stroke-width="1.3" fill="none"/></svg>
<div class="t" style="left:1117px;top:788px;font-size:17.5px;letter-spacing:0.2px;color:#e0e0e0">Functions</div>
<svg style="left:1517px;top:793px" width="28" height="10"><path d="M1 1H9L5 5Z" fill="#e0e0e0"/><path d="M16.5 1L23.5 8M23.5 1L16.5 8" stroke="#e8e8e8" stroke-width="1.4"/></svg>
<svg style="left:1122px;top:816px" width="8" height="12"><path d="M1.5 1L6.5 6L1.5 11" stroke="#9a9a9a" stroke-width="1.2" fill="none"/></svg>
<div class="t" style="left:1141px;top:814.6px;font-size:16px;letter-spacing:0.2px;color:#e0e0e0">Interface</div>
<svg style="left:1122px;top:838px" width="8" height="12"><path d="M1.5 1L6.5 6L1.5 11" stroke="#9a9a9a" stroke-width="1.2" fill="none"/></svg>
<div class="t" style="left:1141px;top:836.6px;font-size:16px;letter-spacing:0.2px;color:#e0e0e0">I/O</div>
<svg style="left:1122px;top:860px" width="8" height="12"><path d="M1.5 1L6.5 6L1.5 11" stroke="#9a9a9a" stroke-width="1.2" fill="none"/></svg>
<div class="t" style="left:1141px;top:858.6px;font-size:16px;letter-spacing:0.2px;color:#e0e0e0">Math</div>
<svg style="left:1122px;top:882px" width="8" height="12"><path d="M1.5 1L6.5 6L1.5 11" stroke="#9a9a9a" stroke-width="1.2" fill="none"/></svg>
<div class="t" style="left:1141px;top:880.6px;font-size:16px;letter-spacing:0.2px;color:#e0e0e0">String</div>
<svg style="left:1122px;top:904px" width="8" height="12"><path d="M1.5 1L6.5 6L1.5 11" stroke="#9a9a9a" stroke-width="1.2" fill="none"/></svg>
<div class="t" style="left:1141px;top:902.6px;font-size:16px;letter-spacing:0.2px;color:#e0e0e0">Tools</div>
<svg style="left:1122px;top:926px" width="8" height="12"><path d="M1.5 1L6.5 6L1.5 11" stroke="#9a9a9a" stroke-width="1.2" fill="none"/></svg>
<div class="t" style="left:1141px;top:924.6px;font-size:16px;letter-spacing:0.2px;color:#e0e0e0">All</div>
<div class="t" style="left:1195px;top:1052.5px;font-size:16px;letter-spacing:0.2px;color:#8c8a86">Select function and press F1 for help.</div>
<svg style="left:1533px;top:1084px" width="11" height="11"><g fill="#dcdcdc"><rect x="7" y="0" width="3" height="3"/><rect x="3" y="4" width="3" height="3"/><rect x="7" y="4" width="3" height="3"/><rect x="0" y="8" width="2" height="3"/><rect x="3" y="8" width="3" height="3"/><rect x="7" y="8" width="3" height="3"/></g></svg>
<svg style="left:0;top:0" width="1000" height="94" viewBox="0 0 1000 94">
<g stroke="#8a8884" stroke-width="1">
<path d="M4.5 74V84M237.5 74V84M386.5 74V84M508.5 74V84M576.5 74V84M725.5 74V84M955.5 74V84"/>
</g>
<!-- new doc -->
<path d="M19.5 70.5H28L32.5 75V86.5H19.5Z" fill="#f8faff" stroke="#9aa8c8" stroke-width="1"/>
<path d="M28 70.5V75H32.5" fill="#d8e0f0" stroke="#9aa8c8" stroke-width="1"/>
<!-- chevrons -->
<path d="M44 76.5L48.5 81L53 76.5M86 76.5L90.5 81L95 76.5" stroke="#85837f" stroke-width="1.2" fill="none"/>
<!-- open folder -->
<path d="M58.5 71.5H62L63 73H72V77H78L71 86H58.5Z" fill="#f8e8a8" stroke="#dcb650" stroke-width="1"/>
<path d="M58.5 86L65 77H78" fill="none" stroke="#dcb650" stroke-width="1"/>
<!-- save -->
<rect x="101" y="69.5" width="18" height="18.5" rx="1.5" fill="#6ea4e4"/>
<rect x="104" y="70.5" width="12.5" height="8.5" fill="#fff"/>
<rect x="105" y="81" width="10" height="6" fill="#e8e8e8"/>
<rect x="106" y="82" width="2.5" height="4" fill="#5a8ed8"/>
<!-- save as -->
<path d="M135.5 69.5H143L146 72.5V83H135.5Z" fill="#f8faff" stroke="#a8b4d0" stroke-width="1"/>
<rect x="127" y="73" width="13" height="14" rx="1.2" fill="#6ea4e4"/>
<rect x="129" y="74" width="9" height="6.5" fill="#fff"/>
<rect x="130" y="82" width="7" height="4" fill="#e8e8e8"/>
<rect x="131" y="83" width="1.8" height="2.5" fill="#5a8ed8"/>
<!-- save all -->
<path d="M161 70H173V84L166 88Z" fill="#6ea4e4"/>
<path d="M162 70.5H172V83L165 86Z" fill="#fff"/>
<path d="M158 72H169V86L162 89Z" fill="#6ea4e4"/>
<path d="M159 72.5H168V85L161 87Z" fill="#fff"/>
<rect x="154" y="75" width="12" height="13" rx="1.2" fill="#6ea4e4"/>
<rect x="156" y="76" width="8" height="6" fill="#fff"/>
<rect x="157" y="83.5" width="6" height="3.5" fill="#e8e8e8"/>
<rect x="158" y="84" width="1.8" height="2.5" fill="#3a5ed0"/>
<!-- folder -->
<path d="M184.5 71.5H188L189.5 73H198.5V85.5H184.5Z" fill="#f8e8a8" stroke="#dcb650" stroke-width="1"/>
<path d="M186 75.5H198.5" stroke="#dcb650" stroke-width="1"/>
<!-- folders -->
<g fill="#f8e8a8" stroke="#dcb650" stroke-width="1">
<path d="M216.5 69.5H220L221 71H228V80.5H216.5Z"/>
<path d="M212.5 74H216L217 75.5H224V85H212.5Z"/>
<path d="M208.5 78.5H212L213 80H220V89H208.5Z"/>
</g>
<!-- scissors -->
<g stroke="#c8c8c2" fill="none">
<path d="M252 71L259 80M257 69L260 80" stroke-width="2.2"/>
<circle cx="256" cy="84.5" r="2.3" stroke-width="1.5"/>
<circle cx="263" cy="80.5" r="2.3" stroke-width="1.5"/>
</g>
<!-- copy -->
<path d="M277 70H284.5L286 71.5V83H277Z" fill="#dcdcd8" stroke="#c8c8c4" stroke-width="0.8"/>
<path d="M283.5 74.5H290.5L294 78V88H283.5Z" fill="#dcdcd8" stroke="#c0c0bc" stroke-width="0.8"/>
<!-- paste -->
<rect x="304.5" y="70" width="16.5" height="16.5" rx="1.5" fill="#f8e8a8" stroke="#e0b848" stroke-width="1"/>
<rect x="308.5" y="68.8" width="8" height="3.2" fill="#eef2ff" stroke="#90a8d0" stroke-width="0.8"/>
<path d="M312.5 76.5H319L322 79.5V88H312.5Z" fill="#f8faff" stroke="#90a8d0" stroke-width="0.9"/>
<!-- undo / redo -->
<g fill="none" stroke-width="2.4" stroke-linecap="butt">
<path d="M334 78.5 A6.5 6.5 0 1 1 342.5 86.5" stroke="#a8a8a4"/>
<path d="M373 78.5 A6.5 6.5 0 1 0 364.5 86.5" stroke="#8e8e8a"/>
</g>
<path d="M331 71.5V80.5H340Z" fill="#a8a8a4"/>
<path d="M376 71.5V80.5H367Z" fill="#8e8e8a"/>
<!-- magnifier -->
<path d="M400 87.5L405.5 81.5" stroke="#f0d478" stroke-width="3" stroke-linecap="round"/>
<circle cx="410.7" cy="75.8" r="6.5" fill="#f8faff" stroke="#b8c4e0" stroke-width="0.8"/>
<!-- find replace -->
<text x="425" y="88" font-family="Liberation Sans" font-size="15" fill="#6aaae8">A</text>
<text x="435.5" y="82.5" font-family="Liberation Sans" font-size="14" font-weight="bold" fill="#5a90d0">B</text>
<path d="M427 71.5H432V69L437.5 73.5L432 78V75.5H427Z" fill="#f8e8a0" stroke="#e0c060" stroke-width="0.6"/>
<!-- find in files -->
<path d="M452 70.5H455L456 72H465.5V82.5H452Z" fill="#f8e8a8" stroke="#dcb650" stroke-width="0.9"/>
<path d="M452 82.5L460 75" stroke="#dcb650" stroke-width="0.8"/>
<path d="M457.5 88L462 83" stroke="#f0d478" stroke-width="2.4" stroke-linecap="round"/>
<circle cx="466" cy="79" r="4.8" fill="#f8faff" stroke="#b8c4e0" stroke-width="0.8"/>
<!-- goto arrow -->
<path d="M481 79H494M488 72L495 79L488 86" stroke="#6aaae8" stroke-width="3.2" fill="none" stroke-linecap="round" stroke-linejoin="round"/>
<!-- script -->
<path d="M526.5 71Q524.5 71 524.5 73.5L524 85.5Q524 87.5 526 87.5H537.5Q539.5 87.5 539.2 85.5L539 73.5H540.5Q541.5 70 539 70H527Z" fill="#f4f6ff" stroke="#a8b4d8" stroke-width="0.8"/>
<path d="M525 73H539" stroke="#c8d0e8" stroke-width="0.8"/>
<path d="M521.5 73.5V89L530 81.3Z" fill="#6aaae8"/>
<path d="M536 87.5H540L538 89.5Z" fill="#777"/>
<!-- template -->
<path d="M553.5 71Q551.5 71 551.5 73.5L551 85.5Q551 87.5 553 87.5H564.5Q566.5 87.5 566.2 85.5L566 73.5H567.5Q568.5 70 566 70H554Z" fill="#f8e8a8" stroke="#e0b848" stroke-width="0.8"/>
<path d="M552 73H566" stroke="#e8c868" stroke-width="0.8"/>
<g fill="#d8b048"><circle cx="555.5" cy="75.5" r="1.2"/><circle cx="561.5" cy="78.5" r="1.2"/><circle cx="562.5" cy="82.5" r="1.2"/></g>
<path d="M548.8 73.5V89L557 81.3Z" fill="#6aaae8"/>
<path d="M563 87.5H567L565 89.5Z" fill="#777"/>
<!-- hex box -->
<rect x="585.5" y="66.5" width="26" height="25" fill="#353430" stroke="#7a7870" stroke-width="1"/>
<text x="589.5" y="83.2" font-family="Liberation Mono" font-size="10" letter-spacing="0.9" fill="#5a9ad8" transform="translate(589.5 83.2) scale(1 1.05) translate(-589.5 -83.2)">Hex</text>
<!-- lines arrows -->
<g stroke="#c4c4c0" stroke-width="0.9">
<path d="M616 70.5H632M616 72.4H625.5M616 74.3H623M616 76.4H624M616 78.4H625M616 80.5H632M616 82.4H625.5M616 84.4H623M616 86.5H624"/>
</g>
<path d="M633 70.5V75H628M629 72L625.5 75L629 78M633 80.5V85H628M629 82L625.5 85L629 88" stroke="#c4c4c0" stroke-width="1.8" fill="none"/>
<!-- pilcrow -->
<path d="M649 72.3H657M650.8 72.3V86M654.6 72.3V86" stroke="#b4b4b0" stroke-width="1.1"/>
<path d="M651 72A3.8 3.8 0 0 0 651 79.7Z" fill="#b4b4b0"/>
<!-- columns -->
<g stroke="#6aaae8" stroke-width="1">
<path d="M671 72.5H678M671 74.5H678M671 76.5H678M671 78.5H678M671 80.5H678M671 82.5H678M671 84.5H678M671 86.5H678"/>
<path d="M680 72.5H687M680 74.5H687M680 76.5H687M680 78.5H687M680 80.5H687M680 82.5H687M680 84.5H687M680 86.5H687"/>
</g>
<!-- highlighter -->
<path d="M696 69H700.5L708.5 77.5L700.5 84.5L696 79Z" fill="#f8faff"/>
<path d="M708.5 77.5L714.5 85.5H703L700.5 84.5Z" fill="#f8e08a"/>
<path d="M711 87.5H715L713 89.5Z" fill="#777"/>
<!-- calculator -->
<rect x="739.5" y="70" width="14.5" height="17.3" rx="1.5" fill="#6ea4e4"/>
<rect x="741" y="71.8" width="11.5" height="3.2" fill="#fff"/>
<g fill="#f8e08a">
<rect x="741.5" y="77" width="2" height="2"/><rect x="744.5" y="77" width="2" height="2"/><rect x="747.5" y="77" width="2" height="2"/><rect x="750.5" y="77" width="2" height="2"/>
<rect x="741.5" y="80" width="2" height="2"/><rect x="744.5" y="80" width="2" height="2"/><rect x="747.5" y="80" width="2" height="2"/><rect x="750.5" y="80" width="2" height="2"/>
<rect x="741.5" y="83" width="2" height="2"/><rect x="744.5" y="83" width="2" height="2"/><rect x="747.5" y="83" width="2" height="2"/><rect x="750.5" y="83" width="2" height="2"/>
</g>
<!-- doc ? -->
<path d="M771.5 69H779L782 72V83H771.5Z" fill="#f8faff" stroke="#a8b4d8" stroke-width="0.8"/>
<path d="M766.5 73H774L777 76V86H766.5Z" fill="#f8faff" stroke="#a8b4d8" stroke-width="0.8"/>
<path d="M771 77.5Q771 74.5 774.5 74.5Q778 74.5 778 77.5Q778 79.5 775 80.5V83" stroke="#f0d478" stroke-width="2.3" fill="none"/>
<circle cx="775" cy="86.5" r="1.6" fill="#f0d478"/>
<!-- swap arrows -->
<path d="M792 76H802V71L810 76.5L802 82V79H792Z" fill="#f8e08a"/>
<path d="M810 80H800V75.5L792 81L800 87V83H810Z" fill="#6aaae8"/>
<!-- histogram -->
<path d="M818.5 69V88.5H838" stroke="#f0d070" stroke-width="2" fill="none"/>
<path d="M821 87V83L824 78L825 74L827 80L829 83L831 81L833 84L836 87Z" fill="#6aaae8"/>
<g stroke="#3c3a36" stroke-width="0.5"><path d="M823 75V88M825 75V88M827 75V88M829 75V88M831 75V88M833 75V88"/></g>
<!-- plus minus -->
<path d="M846 75H856M851 70V80M858 83H864" stroke="#6aaae8" stroke-width="2.6"/>
<path d="M848 86L863 72" stroke="#6aaae8" stroke-width="1.8"/>
<path d="M862 87.5H866L864 89.5Z" fill="#777"/>
<!-- check sigma -->
<path d="M879 71H891V74H884L888 79L884 84H891V87H879V85L883.5 79L879 73Z" fill="#6aaae8"/>
<path d="M873.5 77L878.5 82L888.5 71" stroke="#f0d070" stroke-width="2.4" fill="none"/>
<!-- mov -->
<text x="898.5" y="82.5" font-family="Liberation Sans" font-size="11" fill="#6aaae8">mov</text>
<!-- 10/16 -->
<text x="934" y="77" font-family="Liberation Sans" font-size="9.5" fill="#6aaae8">10</text>
<text x="925.5" y="89" font-family="Liberation Sans" font-size="9.5" fill="#6aaae8">16</text>
<path d="M933 71Q927 71 927 77V80M924 77.5L927 81.5L930 77.5" stroke="#6aaae8" stroke-width="2.4" fill="none"/>
<path d="M937 88Q943 88 943 82V79M940 81.5L943 77.5L946 81.5" stroke="#6aaae8" stroke-width="2.4" fill="none"/>
<!-- pause -->
<rect x="973" y="75" width="3.5" height="9" fill="#b0b0ac"/><rect x="978.5" y="75" width="3.5" height="9" fill="#b0b0ac"/>
</svg>

</body></html>
